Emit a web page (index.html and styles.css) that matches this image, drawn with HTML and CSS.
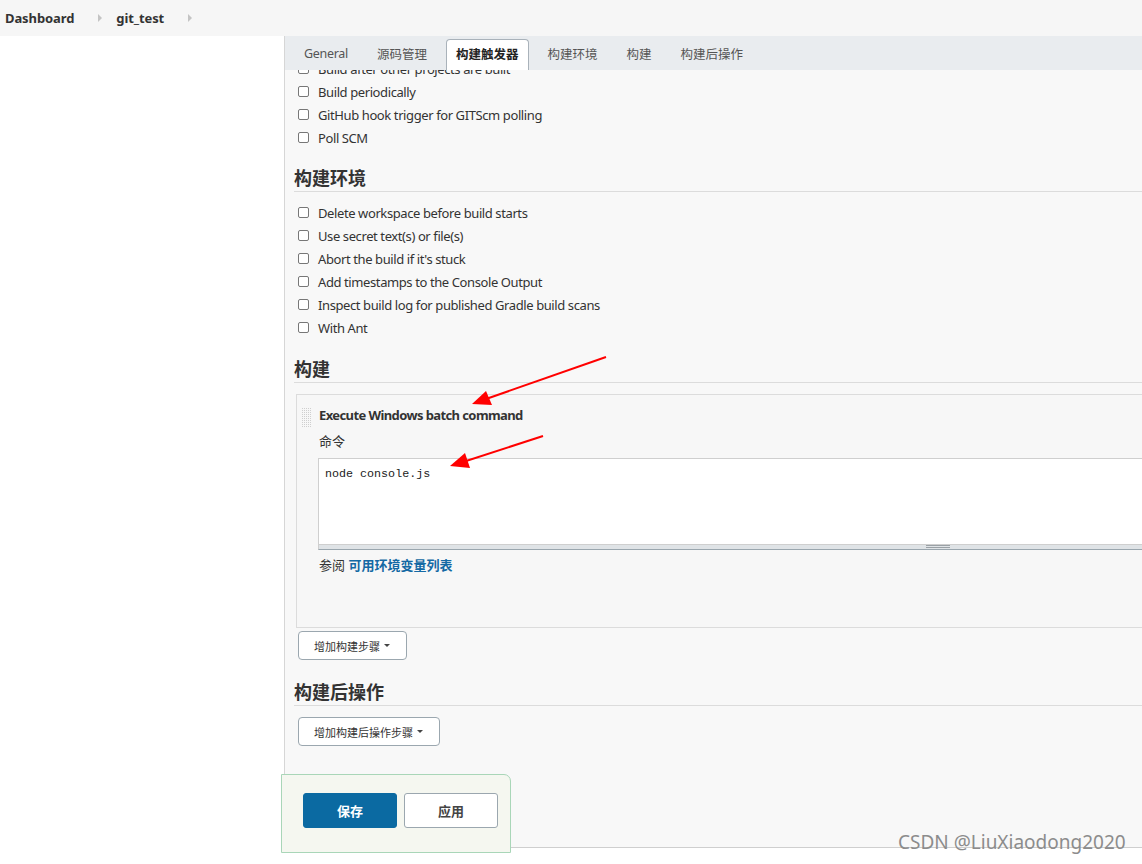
FILE: index.html
```html
<!DOCTYPE html>
<html lang="zh-CN">
<head>
    <meta charset="UTF-8">
    <meta name="viewport" content="width=device-width, initial-scale=1.0">
    <title>git_test Config [Jenkins]</title>
    <link rel="stylesheet" href="styles.css">
</head>
<body>
    <div class="breadcrumbs">
        <span class="crumb">Dashboard</span>
        <span class="crumb-arrow"></span>
        <span class="crumb">git_test</span>
        <span class="crumb-arrow"></span>
    </div>

    <div class="page">
        <div class="side-panel"></div>

        <div class="config">
            <div class="tabbar">
                <span class="tab latin">General</span>
                <span class="tab">源码管理</span>
                <span class="tab tab-active">构建触发器</span>
                <span class="tab">构建环境</span>
                <span class="tab">构建</span>
                <span class="tab">构建后操作</span>
            </div>

            <div class="config-body">
                <!-- 构建触发器 (scrolled under the tab bar) -->
                <div class="check-list">
                    <div class="scroll-clip">
                        <label class="check-row"><span class="checkbox"></span>Build after other projects are built</label>
                    </div>
                    <label class="check-row"><span class="checkbox"></span>Build periodically</label>
                    <label class="check-row"><span class="checkbox"></span>GitHub hook trigger for GITScm polling</label>
                    <label class="check-row"><span class="checkbox"></span>Poll SCM</label>
                </div>

                <!-- 构建环境 -->
                <h2 class="section-title">构建环境</h2>
                <div class="check-list">
                    <label class="check-row"><span class="checkbox"></span>Delete workspace before build starts</label>
                    <label class="check-row"><span class="checkbox"></span>Use secret text(s) or file(s)</label>
                    <label class="check-row"><span class="checkbox"></span>Abort the build if it's stuck</label>
                    <label class="check-row"><span class="checkbox"></span>Add timestamps to the Console Output</label>
                    <label class="check-row"><span class="checkbox"></span>Inspect build log for published Gradle build scans</label>
                    <label class="check-row"><span class="checkbox"></span>With Ant</label>
                </div>

                <!-- 构建 -->
                <h2 class="section-title build">构建</h2>
                <div class="build-step">
                    <div class="drag-handle"></div>
                    <div class="step-content">
                        <div class="step-title">Execute Windows batch command</div>
                        <div class="field-label">命令</div>
                        <div class="code-field">
                            <div class="code-text">node console.js</div>
                            <div class="code-resize"><span class="grip"></span></div>
                        </div>
                        <div class="field-help">参阅 <span class="help-link">可用环境变量列表</span></div>
                    </div>
                </div>
                <button class="btn-add">增加构建步骤 <span class="caret"></span></button>

                <!-- 构建后操作 -->
                <h2 class="section-title post">构建后操作</h2>
                <button class="btn-add">增加构建后操作步骤 <span class="caret"></span></button>
            </div>
        </div>
    </div>

    <div class="bottom-sticker">
        <button class="btn-save">保存</button>
        <button class="btn-apply">应用</button>
    </div>

    <div class="watermark">CSDN @LiuXiaodong2020</div>

    <svg class="annotations" width="1142" height="864" viewBox="0 0 1142 864">
        <g stroke="#f00" stroke-width="2" fill="#f00">
            <line x1="606" y1="357" x2="486" y2="399"/>
            <polygon points="472,404 492,405 486,391" stroke="none"/>
            <line x1="543" y1="436" x2="463" y2="462"/>
            <polygon points="450,466 470,468 465,453" stroke="none"/>
        </g>
    </svg>
</body>
</html>
```

FILE: styles.css
```css
* {
    box-sizing: border-box;
}

html,
body {
    overflow: hidden;
}

body {
    margin: 0;
    background-color: white;
    color: #333;
    font-family: 'Noto Sans', 'Noto Sans CJK SC', sans-serif;
    font-size: 13px;
}

/* breadcrumb bar */
.breadcrumbs {
    height: 36px;
    background-color: #f6f6f6;
    display: flex;
    align-items: center;
    padding-left: 5px;
}

.crumb {
    font-weight: 700;
    font-size: 13px;
    color: #333;
    letter-spacing: -0.1px;
}

.crumb-arrow {
    width: 0;
    height: 0;
    border-top: 4px solid transparent;
    border-bottom: 4px solid transparent;
    border-left: 4px solid #c4c4c4;
    margin: 0 14px 0 24px;
}

/* page layout */
.page {
    display: flex;
    align-items: flex-start;
}

.side-panel {
    flex: 0 0 284px;
}

.config {
    flex: 0 0 1400px;
    background-color: #f8f8f8;
    border-left: 1px solid #d6d6d6;
    border-bottom: 1px solid #cfcfcf;
}

.tabbar {
    height: 34px;
    background-color: #e9ecef;
    display: flex;
    align-items: flex-end;
    padding-left: 9px;
    gap: 9px;
}

.tab {
    height: 31px;
    padding: 0 9px 3px;
    display: flex;
    align-items: center;
    color: #555;
    font-size: 12.5px;
    border: 1px solid transparent;
    border-bottom: none;
}

.tab.latin {
    letter-spacing: -0.3px;
}

.tab-active {
    background-color: white;
    border-color: #a9b2ba;
    border-radius: 4px 4px 0 0;
    color: #222;
    font-weight: 700;
}

.config-body {
    padding: 0 0 101px 9px;
}

/* checkbox rows */
.check-list {
    padding-left: 4px;
}

.scroll-clip {
    height: 10px;
    overflow: hidden;
    display: flex;
    align-items: flex-end;
}

.check-row {
    flex: 0 0 auto;
    height: 23px;
    display: flex;
    align-items: center;
    color: #333;
    letter-spacing: -0.4px;
}

.checkbox {
    width: 11px;
    height: 11px;
    border: 1px solid #777;
    border-radius: 2px;
    background-color: white;
    margin-right: 9px;
}

.section-title {
    margin: 17px 0 9px;
    line-height: 24px;
    padding-bottom: 1px;
    border-bottom: 1px solid #dcdcdc;
    font-size: 18px;
    font-weight: 700;
    color: #333;
}

.section-title.build {
    margin-top: 18px;
}

.section-title.post {
    margin-top: 20px;
    margin-bottom: 11px;
}

/* build step */
.build-step {
    margin: 11px 0 0 2px;
    border: 1px solid #dcdcdc;
    border-right: none;
    background-color: #f7f7f7;
    display: flex;
    padding: 10px 0 52px 4px;
}

.drag-handle {
    flex: 0 0 10px;
    height: 20px;
    margin-top: 2px;
    margin-right: 8px;
    background-color: #cfcfcf;
    background-image: linear-gradient(90deg, #f7f7f7 1px, transparent 1px), linear-gradient(#f7f7f7 1px, transparent 1px);
    background-size: 2px 2px;
}

.step-content {
    flex: 1;
}

.step-title {
    font-weight: 700;
    line-height: 20px;
    color: #333;
    letter-spacing: -0.6px;
}

.field-label {
    margin-top: 6px;
    line-height: 20px;
}

.code-field {
    margin: 7px 0 0 -1px;
}

.code-text {
    height: 87px;
    background-color: white;
    border: 1px solid #cfcfcf;
    border-right: none;
    padding: 5px 6px;
    font-family: 'Liberation Mono', 'Noto Sans CJK SC', monospace;
    font-size: 11.7px;
    line-height: 20px;
    color: #222;
}

.code-resize {
    height: 5px;
    background-color: #dfe3e6;
    border-bottom: 1px solid #9aa6ae;
    border-left: 1px solid #cfcfcf;
    display: flex;
    align-items: flex-start;
}

.grip {
    margin-left: 607px;
    width: 24px;
    height: 3px;
    border-top: 1px solid #9aa1a6;
    border-bottom: 1px solid #9aa1a6;
}

.field-help {
    margin-top: 5px;
    line-height: 20px;
}

.help-link {
    color: #1469a4;
    font-weight: 600;
}

/* buttons */
.btn-add {
    display: flex;
    align-items: center;
    gap: 4px;
    margin: 3px 0 0 4px;
    height: 29px;
    padding: 0 16px 0 15px;
    background-color: white;
    border: 1px solid #9ba7af;
    border-radius: 4px;
    font-family: inherit;
    font-size: 11px;
    color: #333;
}

.section-title.post + .btn-add {
    margin-top: 0;
}

.caret {
    width: 0;
    height: 0;
    border-left: 3px solid transparent;
    border-right: 3px solid transparent;
    border-top: 3px solid #444;
}

/* sticky save bar */
.bottom-sticker {
    position: absolute;
    left: 281px;
    top: 774px;
    width: 230px;
    height: 79px;
    background-color: #f5f7f0;
    border: 1px solid #a9d6b8;
    border-radius: 0 7px 0 0;
    display: flex;
    gap: 7px;
    padding: 18px 0 0 21px;
}

.btn-save,
.btn-apply {
    width: 94px;
    height: 35px;
    border-radius: 3px;
    font-family: inherit;
    font-size: 13px;
    font-weight: 700;
}

.btn-save {
    background-color: #0b6aa2;
    border: 1px solid #0b6aa2;
    color: white;
}

.btn-apply {
    background-color: white;
    border: 1px solid #9ba7af;
    color: #444;
}

.watermark {
    position: absolute;
    left: 898px;
    top: 829px;
    font-size: 19px;
    color: #8c8c8c;
}

.annotations {
    position: absolute;
    left: 0;
    top: 0;
    pointer-events: none;
}
```
